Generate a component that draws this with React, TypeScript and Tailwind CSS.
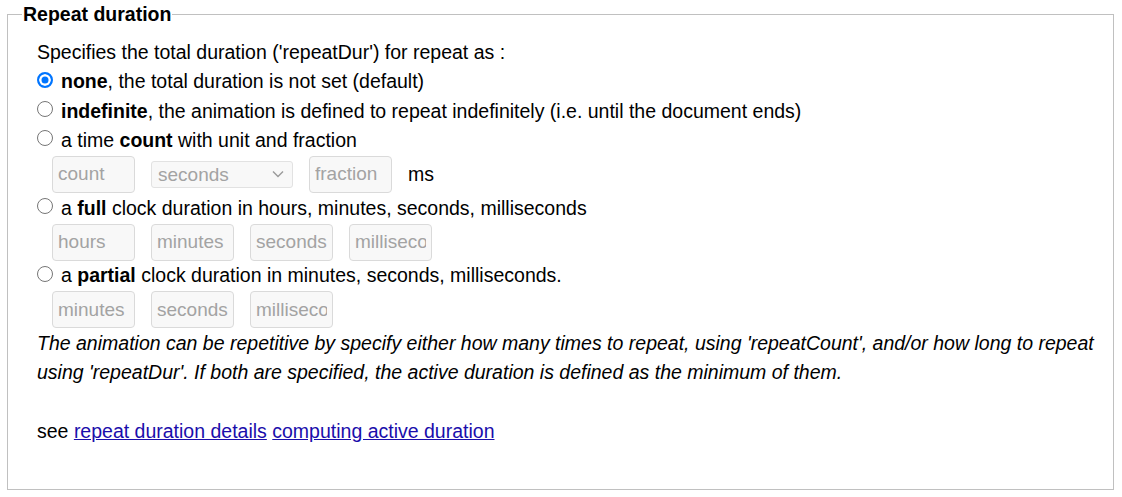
import React from "react";

const font = { fontFamily: '"Liberation Sans", Arial, sans-serif' };

function Field({ placeholder }: { placeholder: string }) {
  return (
    <input
      disabled
      placeholder={placeholder}
      className="w-[83px] h-[37px] px-[5px] text-[19px] bg-[#f8f8f8] border border-[#dadada] rounded-[4px] placeholder:text-[#a3a3a3] text-[#a3a3a3] outline-none"
    />
  );
}

function Radio({ checked }: { checked?: boolean }) {
  return checked ? (
    <span className="w-4 h-4 mr-2 shrink-0 relative -top-[2px] rounded-full border-2 border-[#0075ff] bg-[#0075ff] shadow-[inset_0_0_0_2.5px_white]" />
  ) : (
    <span className="w-4 h-4 mr-2 shrink-0 relative -top-[2px] rounded-full bg-white border border-[#767676]" />
  );
}

export default function App() {
  return (
    <div className="bg-white w-[1122px] h-[497px] text-black text-[19.5px]" style={font}>
      <fieldset className="ml-[7px] mr-[8px] border border-[#c0c0c0] pl-[29px] pr-[12px] pt-[9px] pb-[43px]">
        <legend className="-ml-[15px] px-[1px] font-bold leading-[29px]">Repeat duration</legend>

        <div className="leading-[29.25px]">Specifies the total duration ('repeatDur') for repeat as :</div>

        <label className="flex items-center h-[29.25px]">
          <Radio checked />
          <span>
            <b>none</b>, the total duration is not set (default)
          </span>
        </label>
        <label className="flex items-center h-[29.25px]">
          <Radio />
          <span>
            <b>indefinite</b>, the animation is defined to repeat indefinitely (i.e. until the document ends)
          </span>
        </label>
        <label className="flex items-center h-[29.25px]">
          <Radio />
          <span>
            a time <b>count</b> with unit and fraction
          </span>
        </label>
        <div className="flex items-center h-[38.5px] pl-[15px] gap-4">
          <Field placeholder="count" />
          <div className="relative">
            <select
              disabled
              className="appearance-none w-[142px] h-[27px] pl-[6px] text-[19px] leading-[25px] bg-[#f8f8f8] border border-[#e2e2e2] rounded-[3px] text-[#a3a3a3]"
            >
              <option>seconds</option>
            </select>
            <svg
              className="absolute right-[9px] top-[10px] pointer-events-none"
              width="12"
              height="8"
              viewBox="0 0 12 8"
              fill="none"
              stroke="#9a9a9a"
              strokeWidth="1.4"
            >
              <path d="M1 1.5 6 6.5 11 1.5" />
            </svg>
          </div>
          <Field placeholder="fraction" />
          <span>ms</span>
        </div>

        <label className="flex items-center h-[29.25px]">
          <Radio />
          <span>
            a <b>full</b> clock duration in hours, minutes, seconds, milliseconds
          </span>
        </label>
        <div className="flex items-center h-[38.5px] pl-[15px] gap-4">
          <Field placeholder="hours" />
          <Field placeholder="minutes" />
          <Field placeholder="seconds" />
          <Field placeholder="milliseconds" />
        </div>

        <label className="flex items-center h-[29.25px]">
          <Radio />
          <span>
            a <b>partial</b> clock duration in minutes, seconds, milliseconds.
          </span>
        </label>
        <div className="flex items-center h-[38.5px] pl-[15px] gap-4">
          <Field placeholder="minutes" />
          <Field placeholder="seconds" />
          <Field placeholder="milliseconds" />
        </div>

        <p className="italic leading-[29.25px]">
          The animation can be repetitive by specify either how many times to repeat, using 'repeatCount', and/or how
          long to repeat using 'repeatDur'. If both are specified, the active duration is defined as the minimum of them.
        </p>
        <div className="h-[29.25px]" />
        <div className="leading-[29.25px]">
          see{" "}
          <a href="#" className="text-[#1a0dab] underline">
            repeat duration details
          </a>{" "}
          <a href="#" className="text-[#1a0dab] underline">
            computing active duration
          </a>
        </div>
      </fieldset>
    </div>
  );
}
